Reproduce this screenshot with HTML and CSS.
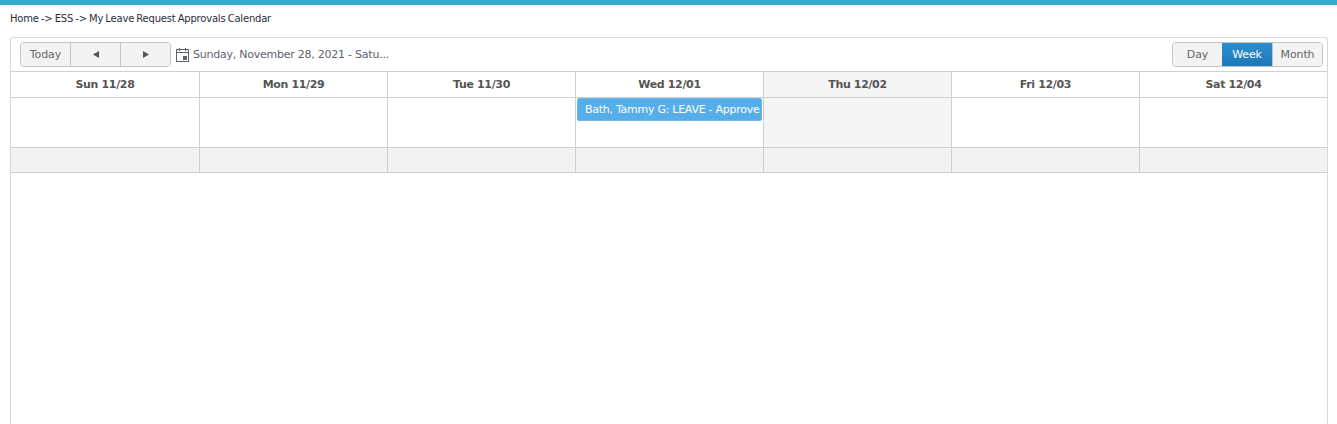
FILE: index.html
```html
<!DOCTYPE html>
<html lang="en">
<head>
<meta charset="utf-8">
<title>My Leave Request Approvals Calendar</title>
<link rel="stylesheet" href="styles.css">
</head>
<body>
<div class="topbar"></div>
<div class="crumbs">Home -&gt; ESS -&gt; My Leave Request Approvals Calendar</div>
<section class="scheduler">
  <div class="toolbar">
    <div class="btn-group">
      <button class="btn today">Today</button>
      <button class="btn arrow"><svg width="6" height="7" viewBox="0 0 6 7"><path d="M6 0v7L0 3.500z" fill="#555"/></svg></button>
      <button class="btn arrow"><svg width="6" height="7" viewBox="0 0 6 7"><path d="M0 0v7l6-3.500z" fill="#555"/></svg></button>
    </div>
    <div class="date-range">
      <svg class="cal" width="13" height="14" viewBox="0 0 13 14" fill="none" stroke="#5b6270"><rect x=".5" y="1.500" width="12" height="12"/><path d="M.5 4.500h12M3.500 0v3M9.500 0v3"/><rect x="7.500" y="8.500" width="3" height="3" fill="#5b6270"/></svg>
      <span>Sunday, November 28, 2021 - Satu...</span>
    </div>
    <div class="btn-group views">
      <button class="btn view first">Day</button>
      <button class="btn view active">Week</button>
      <button class="btn view">Month</button>
    </div>
  </div>
  <div class="grid head">
    <div class="cell">Sun 11/28</div>
    <div class="cell">Mon 11/29</div>
    <div class="cell">Tue 11/30</div>
    <div class="cell">Wed 12/01</div>
    <div class="cell today-col">Thu 12/02</div>
    <div class="cell">Fri 12/03</div>
    <div class="cell">Sat 12/04</div>
  </div>
  <div class="grid allday">
    <div class="cell"></div>
    <div class="cell"></div>
    <div class="cell"></div>
    <div class="cell"><div class="event">Bath, Tammy G: LEAVE - Approve</div></div>
    <div class="cell today-col"></div>
    <div class="cell"></div>
    <div class="cell"></div>
  </div>
  <div class="grid shaded">
    <div class="cell"></div>
    <div class="cell"></div>
    <div class="cell"></div>
    <div class="cell"></div>
    <div class="cell"></div>
    <div class="cell"></div>
    <div class="cell"></div>
  </div>
</section>
</body>
</html>
```
FILE: styles.css
```css
* { box-sizing: border-box; }
html, body { margin: 0; height: 424px; overflow: hidden; background: #fff; }
body { font-family: "DejaVu Sans", sans-serif; font-size: 11px; color: #555; }
.topbar { height: 5px; background: #36a9cd; }
.crumbs { height: 32px; padding: 7px 10px 0; font-size: 10px; line-height: 13px; letter-spacing: -0.2px; word-spacing: -0.8px; color: #2b2f3a; }
.scheduler { margin: 0 9px 0 10px; height: 400px; border: 1px solid #d8d8d8; border-bottom: 0; border-radius: 3px 3px 0 0; }
.toolbar { display: flex; align-items: center; height: 33px; padding: 0 4px 0 9px; }
.btn-group { display: flex; height: 25px; border: 1px solid #c5c5c5; border-radius: 4px; overflow: hidden; background: #f3f3f3; }
.btn { display: flex; align-items: center; justify-content: center; width: 50px; padding: 0; border: 0; border-left: 1px solid #c5c5c5; background: #f3f3f3; color: #666; font: 11px "DejaVu Sans", sans-serif; letter-spacing: -0.1px; }
.btn:first-child { border-left: 0; width: 49px; }
.date-range { display: flex; align-items: center; gap: 4px; margin-left: 5px; letter-spacing: -0.24px; color: #5b6270; }
.views { margin-left: auto; }
.view.active { background: linear-gradient(#2a8fd0, #1d78b5); color: #fff; border-left: 0; }
.grid { display: grid; grid-template-columns: repeat(6, 188px) 1fr; border-top: 1px solid #cfcfcf; }
.cell { border-left: 1px solid #cfcfcf; }
.cell:first-child { border-left: 0; }
.head .cell { display: flex; align-items: center; justify-content: center; font-weight: bold; letter-spacing: -0.35px; color: #555; }
.head { height: 26px; }
.allday { height: 50px; }
.shaded { height: 26px; background: #f2f2f2; border-bottom: 1px solid #cfcfcf; }
.today-col { background: #f5f5f5; }
.event { height: 23px; margin: 0 1px; padding: 0 0 0 7px; background: #55aeea; border: 1px solid #6cbaee; border-radius: 2px; color: #fff; line-height: 21px; letter-spacing: -0.27px; white-space: nowrap; overflow: hidden; }
```
